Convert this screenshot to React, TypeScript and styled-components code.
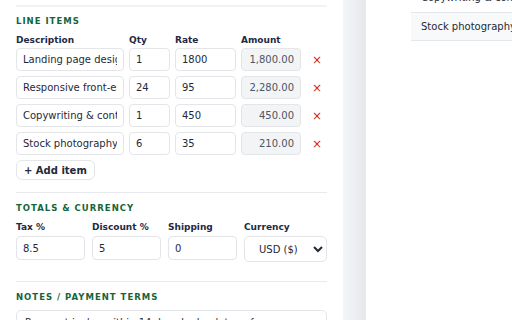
import styled, { createGlobalStyle } from "styled-components";

const GlobalStyle = createGlobalStyle`
  html, body {
    margin: 0;
    padding: 0;
    width: 512px;
    height: 320px;
    overflow: hidden;
    background: #ffffff;
  }
  * { box-sizing: border-box; }
`;

const items = [
  { desc: "Landing page design", qty: "1", rate: "1800", amount: "1,800.00" },
  { desc: "Responsive front-end build", qty: "24", rate: "95", amount: "2,280.00" },
  { desc: "Copywriting & content", qty: "1", rate: "450", amount: "450.00" },
  { desc: "Stock photography", qty: "6", rate: "35", amount: "210.00" }
];

const App = () => {
  return (
    <Layout>
      <GlobalStyle />
      <Editor>
        <Section $first>
          <SectionTitle>Line Items</SectionTitle>
          <ItemGrid>
            <HeadCell>Description</HeadCell>
            <HeadCell>Qty</HeadCell>
            <HeadCell>Rate</HeadCell>
            <HeadCell>Amount</HeadCell>
            <span />
            {items.map((it) => (
              <ItemRow key={it.desc}>
                <Field defaultValue={it.desc} />
                <Field defaultValue={it.qty} />
                <Field defaultValue={it.rate} />
                <Field defaultValue={it.amount} readOnly $computed />
                <RemoveButton aria-label="Remove">×</RemoveButton>
              </ItemRow>
            ))}
          </ItemGrid>
          <AddButton>+ Add item</AddButton>
        </Section>
        <Section $loose>
          <SectionTitle>Totals &amp; Currency</SectionTitle>
          <TotalsGrid>
            <FieldGroup>
              <ColLabel>Tax %</ColLabel>
              <Field defaultValue="8.5" $tall />
            </FieldGroup>
            <FieldGroup>
              <ColLabel>Discount %</ColLabel>
              <Field defaultValue="5" $tall />
            </FieldGroup>
            <FieldGroup>
              <ColLabel>Shipping</ColLabel>
              <Field defaultValue="0" $tall />
            </FieldGroup>
            <FieldGroup>
              <ColLabel>Currency</ColLabel>
              <Select defaultValue="USD">
                <option value="USD">USD ($)</option>
                <option value="EUR">EUR (€)</option>
              </Select>
            </FieldGroup>
          </TotalsGrid>
        </Section>
        <Section>
          <SectionTitle>Notes / Payment Terms</SectionTitle>
          <Notes defaultValue="Payment is due within 14 days by bank transfer." />
        </Section>
      </Editor>
      <Gutter />
      <Preview>
        <PreviewTable>
          <tbody>
            <PreviewRow>
              <td>Copywriting &amp; content</td>
            </PreviewRow>
            <PreviewRow $striped>
              <td>Stock photography</td>
            </PreviewRow>
          </tbody>
        </PreviewTable>
      </Preview>
    </Layout>
  );
};

export default App;

const Layout = styled.div`
  display: flex;
  width: 512px;
  height: 320px;
  overflow: hidden;
  font-family: "DejaVu Sans", Verdana, sans-serif;
`;

const Editor = styled.div`
  width: 343px;
  flex-shrink: 0;
  padding: 5px 16px 0 16px;
  background: #ffffff;
`;

const Section = styled.section<{ $loose?: boolean; $first?: boolean }>`
  border-top: 2px solid #f1f2f4;
  padding: ${({ $first }) => ($first ? "9px" : "10px")} 0
    ${({ $loose }) => ($loose ? "19px" : "12px")};
  & + & {
    border-top: 1px solid #e8eaed;
  }
`;

const SectionTitle = styled.h2`
  margin: 0 0 9px;
  font-size: 8.5px;
  font-weight: 700;
  letter-spacing: 1px;
  text-transform: uppercase;
  color: #15653a;
`;

const ItemGrid = styled.div`
  display: grid;
  grid-template-columns: 108px 41px 61px 60px 26px;
  column-gap: 5px;
  row-gap: 5px;
  align-items: center;
`;

const ItemRow = styled.div`
  display: contents;
`;

const ColLabel = styled.label`
  display: block;
  font-size: 9px;
  font-weight: 700;
  color: #1e2a44;
  margin-bottom: 1px;
`;

const HeadCell = styled(ColLabel)`
  line-height: 10px;
  margin-bottom: -2px;
`;

const Field = styled.input<{ $computed?: boolean; $tall?: boolean }>`
  width: 100%;
  height: ${({ $tall }) => ($tall ? "24px" : "23px")};
  padding: 0 6px;
  border: 1px solid #e3e5e9;
  border-radius: 4px;
  font-family: "DejaVu Sans", Verdana, sans-serif;
  font-size: 10px;
  color: ${({ $computed }) => ($computed ? "#4b5563" : "#1f2937")};
  background: ${({ $computed }) => ($computed ? "#f3f4f6" : "#ffffff")};
  text-align: ${({ $computed }) => ($computed ? "right" : "left")};
  outline: none;
`;

const RemoveButton = styled.button`
  border: none;
  background: none;
  padding: 0 4px 0 0;
  color: #d91c1c;
  font-size: 12px;
  line-height: 1;
  justify-self: center;
  cursor: pointer;
  font-family: "DejaVu Sans", sans-serif;
`;

const AddButton = styled.button`
  margin-top: 5px;
  height: 20px;
  padding: 0 7px;
  border: 1px solid #e3e5e9;
  border-radius: 6px;
  background: #ffffff;
  font-family: "DejaVu Sans", Verdana, sans-serif;
  font-size: 10px;
  font-weight: 700;
  color: #1f2937;
  cursor: pointer;
`;

const TotalsGrid = styled.div`
  display: grid;
  grid-template-columns: 69px 69px 69px 83px;
  column-gap: 7px;
  align-items: start;
`;

const FieldGroup = styled.div`
  display: flex;
  flex-direction: column;
  gap: 3px;
`;

const Select = styled.select`
  height: 26px;
  padding: 0 4px 0 10px;
  border: 1px solid #e3e5e9;
  border-radius: 5px;
  background: #ffffff;
  font-family: "DejaVu Sans", Verdana, sans-serif;
  font-size: 10px;
  color: #1f2937;
`;

const Notes = styled.textarea`
  width: 100%;
  height: 60px;
  margin-top: -1px;
  padding: 6px 8px;
  border: 1px solid #e3e5e9;
  border-radius: 5px;
  font-family: "DejaVu Sans", Verdana, sans-serif;
  font-size: 10px;
  color: #1f2937;
  resize: none;
`;

const Gutter = styled.div`
  width: 23px;
  flex-shrink: 0;
  background: linear-gradient(to right, #f4f5f7, #e6e8eb);
`;

const Preview = styled.div`
  flex: 1;
  padding-left: 45px;
  background: #ffffff;
  overflow: hidden;
`;

const PreviewTable = styled.table`
  margin-top: -16px;
  width: 200px;
  border-collapse: collapse;
  font-size: 10px;
  color: #1f2937;
`;

const PreviewRow = styled.tr<{ $striped?: boolean }>`
  background: ${({ $striped }) => ($striped ? "#f8f9fa" : "#ffffff")};
  border-bottom: 1px solid #e5e7eb;
  td {
    height: 28px;
    padding: 0 10px;
    white-space: nowrap;
  }
`;
